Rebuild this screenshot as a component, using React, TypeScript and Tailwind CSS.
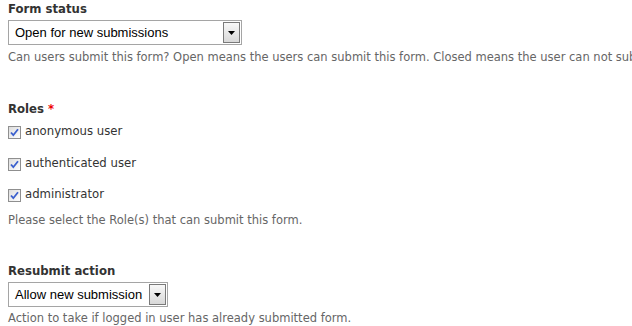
import React from "react";

function Select({ text, width }: { text: string; width: string }) {
  return (
    <div
      className={`${width} h-[25px] border border-[#a5a5a5] bg-white flex items-stretch p-px`}
    >
      <div className="flex-1 flex items-center pl-[5px] text-[13px] text-black font-['Liberation_Sans',Arial,sans-serif] whitespace-nowrap overflow-hidden">
        {text}
      </div>
      <div className="w-[17px] border border-[#7a7a7a] bg-gradient-to-b from-[#f8f8f8] to-[#d8d8d8] flex items-center justify-center">
        <svg width="7" height="4" viewBox="0 0 7 4">
          <polygon points="0,0 7,0 3.5,4" fill="#000" />
        </svg>
      </div>
    </div>
  );
}

function Check({ label }: { label: string }) {
  return (
    <div className="flex items-center h-[16px]">
      <svg width="13" height="13" viewBox="0 0 13 13" className="shrink-0">
        <defs>
          <linearGradient id="cbg" x1="0" y1="0" x2="1" y2="1">
            <stop offset="0" stopColor="#dcdcdc" />
            <stop offset="1" stopColor="#ffffff" />
          </linearGradient>
        </defs>
        <rect x="0.5" y="0.5" width="12" height="12" fill="url(#cbg)" stroke="#8f8f8f" />
        <path d="M3 6.5 L5.3 9.2 L10 3.2" fill="none" stroke="#3a5fcd" strokeWidth="1.8" />
      </svg>
      <span className="ml-[4px] text-[11.7px] text-[#333]">{label}</span>
    </div>
  );
}

const heading =
  "h-[18px] leading-[18px] text-[13px] font-bold text-[#333] font-['DejaVu_Sans_Condensed','DejaVu_Sans',Verdana,sans-serif]";
const desc = "h-[16px] leading-[16px] text-[11.5px] text-[#666] whitespace-nowrap";

export default function App() {
  return (
    <div className="w-[632px] h-[326px] overflow-hidden bg-white pl-2 font-['DejaVu_Sans',Verdana,sans-serif]">
      <div className={heading}>Form status</div>
      <div className="mt-[2px]">
        <Select text="Open for new submissions" width="w-[234px]" />
      </div>
      <div className={`mt-[4px] ${desc}`}>
        Can users submit this form? Open means the users can submit this form. Closed means the user can not submit the form.
      </div>

      <div className={`mt-[35px] ${heading}`}>
        Roles <span className="text-[#e00]">*</span>
      </div>
      <div className="mt-[6px]">
        <Check label="anonymous user" />
      </div>
      <div className="mt-[16px]">
        <Check label="authenticated user" />
      </div>
      <div className="mt-[15px]">
        <Check label="administrator" />
      </div>
      <div className={`mt-[9px] ${desc}`}>
        Please select the Role(s) that can submit this form.
      </div>

      <div className={`mt-[34px] ${heading}`}>Resubmit action</div>
      <div className="mt-[2px]">
        <Select text="Allow new submission" width="w-[160px]" />
      </div>
      <div className={`mt-[3px] ${desc}`}>
        Action to take if logged in user has already submitted form.
      </div>
    </div>
  );
}
